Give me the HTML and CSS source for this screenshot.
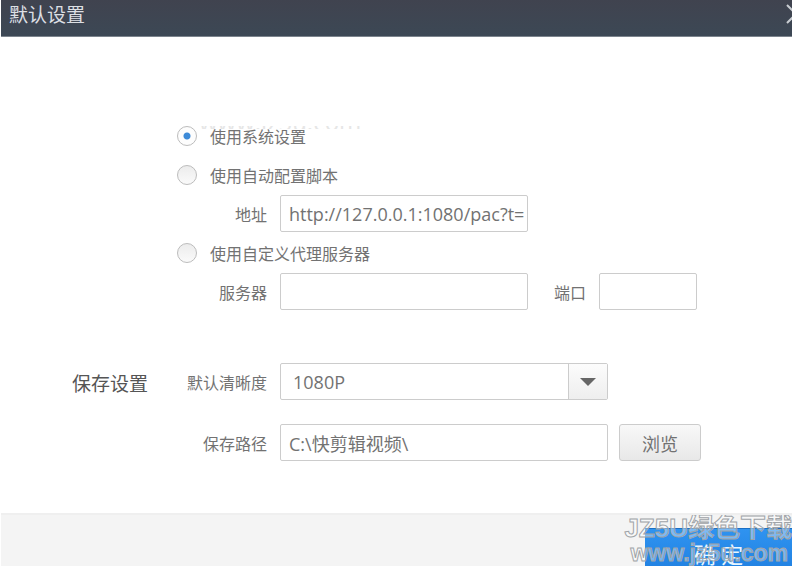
FILE: index.html
```html
<!DOCTYPE html>
<html lang="zh-CN">
	<head>
		<meta charset="utf-8" />
		<title>默认设置</title>
		<link rel="stylesheet" href="styles.css">
	</head>
	<body>
		<div class="dialog">
			<header class="titlebar">
				<h1>默认设置</h1>
				<button type="button" class="close" aria-label="关闭">
					<svg width="20" height="20" viewBox="0 0 20 20"><path d="M1 1 L19 19 M19 1 L1 19" /></svg>
				</button>
			</header>
			<form class="settings">
				<section class="group proxy">
					<div class="rows">
						<label class="option"><input type="radio" name="proxy" checked />使用系统设置</label>
						<span class="mark-tail" aria-hidden="true">www.jz5u.com</span>
						<label class="option"><input type="radio" name="proxy" />使用自动配置脚本</label>
						<div class="row">
							<label class="name" for="pac">地址</label>
							<input type="text" class="medium" id="pac" value="http://127.0.0.1:1080/pac?t=" />
						</div>
						<label class="option"><input type="radio" name="proxy" />使用自定义代理服务器</label>
						<div class="row">
							<label class="name" for="server">服务器</label>
							<input type="text" class="medium" id="server" />
							<label class="port" for="port">端口</label>
							<input type="text" class="small" id="port" />
						</div>
					</div>
				</section>
				<section class="group save">
					<h2>保存设置</h2>
					<div class="rows">
						<div class="row">
							<label class="name" for="quality">默认清晰度</label>
							<div class="select">
								<select id="quality">
									<option>1080P</option>
								</select>
								<span class="arrow"><svg width="16" height="8" viewBox="0 0 16 8"><path d="M0 0 H16 L8 8 Z" /></svg></span>
							</div>
						</div>
						<div class="row">
							<label class="name" for="path">保存路径</label>
							<input type="text" class="large" id="path" value="C:\快剪辑视频\" />
							<button type="button" class="browse">浏览</button>
						</div>
					</div>
				</section>
			</form>
			<footer class="actions">
				<button type="button" class="ok">确 定</button>
				<div class="watermark">
					<span class="site">JZ5U绿色下载</span>
					<span class="url">www.jz5u.com</span>
				</div>
			</footer>
		</div>
	</body>
</html>
```
FILE: styles.css
```css
* {
	box-sizing: border-box;
}

body {
	margin: 0;
	background-color: #fff;
	color: #727272;
	font-family: "Open Sans", "Noto Sans CJK SC", sans-serif;
	font-size: 16px;
}

input,
select,
button {
	margin: 0;
	font-family: inherit;
	color: #727272;
}

.dialog {
	display: flex;
	flex-direction: column;
	height: 100vh;
	margin-left: 1px;
	overflow: hidden;
}

.titlebar {
	display: flex;
	flex: none;
	justify-content: space-between;
	height: 37px;
	padding-left: 8px;
	background: linear-gradient(#40434f, #3c4855);
	border-bottom: 1px solid #7c848d;
	overflow: hidden;
}

.titlebar h1 {
	margin: 0;
	color: #dcdfe3;
	font-size: 19px;
	font-weight: normal;
	line-height: 30px;
}

.close {
	flex: none;
	margin-right: -14px;
	padding: 4px 0 0;
	border: none;
	background: none;
	line-height: 0;
	height: 24px;
}

.close path {
	stroke: #c9cdd2;
	stroke-width: 2;
	fill: none;
}

.settings {
	flex: none;
	padding: 80px 8px 52px 71px;
}

.group {
	display: flex;
}

.group h2 {
	width: 105px;
	margin: 0;
	color: #555;
	font-size: 19px;
	font-weight: normal;
	line-height: 42px;
}

.proxy {
	padding-left: 105px;
}

.save {
	margin-top: 53px;
}

.rows {
	position: relative;
	display: flex;
	flex-direction: column;
	gap: 2px;
}

.save .rows {
	gap: 24px;
}

.option {
	display: flex;
	align-items: center;
	gap: 13px;
	height: 37px;
}

input[type=radio] {
	appearance: none;
	width: 20px;
	height: 20px;
	border: 1px solid #bcbcbc;
	border-radius: 50%;
	background: linear-gradient(#ececec, #fafafa);
}

input[type=radio]:checked {
	background: radial-gradient(circle, #3d8bd8 3px, #fdfdfd 4px);
}

.row {
	display: flex;
	align-items: center;
	height: 37px;
}

.name {
	width: 90px;
	margin-right: 13px;
	text-align: right;
}

input[type=text],
select {
	height: 37px;
	padding: 0 0 0 8px;
	border: 1px solid #ccc;
	border-radius: 2px;
	background-color: #fff;
	font-size: 18px;
	outline: none;
}

.medium {
	width: 248px;
}

.small {
	width: 98px;
}

.large {
	width: 328px;
}

.port {
	margin: 0 13px 0 26px;
}

.select {
	position: relative;
	width: 328px;
}

.select select {
	appearance: none;
	display: block;
	width: 100%;
	padding-left: 12px;
}

.arrow {
	position: absolute;
	top: 1px;
	right: 1px;
	bottom: 1px;
	display: flex;
	align-items: center;
	justify-content: center;
	width: 39px;
	border-left: 1px solid #ccc;
	background: linear-gradient(#fcfcfc, #eee);
	pointer-events: none;
}

.arrow path {
	fill: #666;
}

.browse {
	width: 82px;
	height: 37px;
	margin-left: 11px;
	padding: 0;
	border: 1px solid #ccc;
	border-radius: 3px;
	background: linear-gradient(#f8f8f8, #e8e8e8);
	font-size: 18px;
}

/* bottom edge of the site mark, showing above the first option */
.mark-tail {
	position: absolute;
	top: 9px;
	left: 22px;
	display: flex;
	align-items: flex-end;
	height: 3px;
	overflow: hidden;
	color: #e6e6e6;
	font-size: 24px;
	line-height: 14px;
}

.actions {
	position: relative;
	display: flex;
	flex: 1;
	justify-content: flex-end;
	align-items: flex-start;
	padding-top: 13px;
	border-top: 2px solid #efefef;
	background-color: #f4f4f4;
	overflow: hidden;
}

.ok {
	flex: none;
	width: 147px;
	height: 48px;
	padding: 0;
	border: none;
	border-top: 1px solid #1b6fc4;
	background: linear-gradient(#2f93f0, #1f7fe0);
	color: #e8f6ff;
	font-size: 22px;
}

.watermark {
	position: absolute;
	top: 0;
	right: 0;
	display: flex;
	flex-direction: column;
	color: rgba(255, 255, 255, 0.4);
	font-family: "Liberation Sans", "Noto Sans CJK SC", sans-serif;
	font-weight: bold;
	white-space: nowrap;
	pointer-events: none;
	-webkit-text-stroke: 1px #a0a4a8;
}

.site {
	font-size: 26px;
	line-height: 26px;
}

.url {
	padding-left: 6px;
	font-size: 23px;
	line-height: 24px;
}
```
